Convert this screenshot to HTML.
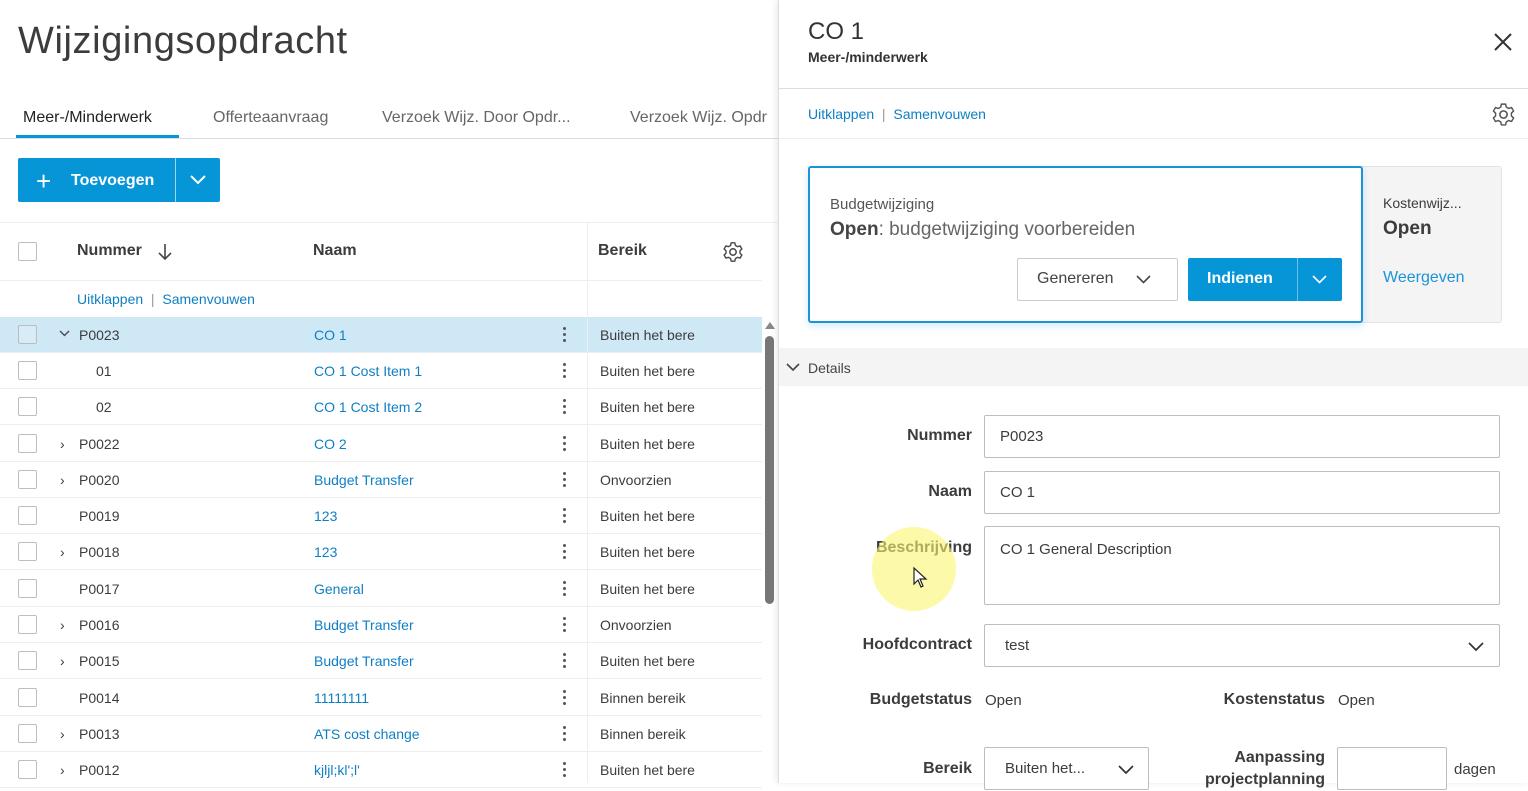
<!DOCTYPE html>
<html><head><meta charset="utf-8"><style>
*{box-sizing:border-box;margin:0;padding:0}
body{width:1528px;height:783px;overflow:hidden;background:#fff;font-family:"Liberation Sans",sans-serif;color:#3c3c3c;position:relative}
.a{position:absolute;white-space:nowrap}
.blue{color:#0f7fc4}
.cb{position:absolute;left:18px;width:19px;height:19px;border:1px solid #bdbdbd;border-radius:2px;background:#fff}
.row{position:absolute;left:0;width:762px;height:36px;border-bottom:1px solid #eee;font-size:14px}
.row span{position:absolute;top:10px}
.row svg{position:absolute;left:59px;top:13px}
.dots{position:absolute;left:563px;top:10px;width:3px}
.dots i{display:block;width:3px;height:3px;background:#555;border-radius:50%;margin-bottom:3px}
.lbl{position:absolute;font-size:16px;font-weight:bold;color:#3c3c3c;text-align:right;width:200px}
.inp{position:absolute;border:1px solid #bdbdbd;border-radius:2px;background:#fff;font-size:15px;padding:12px 15px}
</style></head><body>
<div class="a" style="left:18px;top:20px;font-size:38px;color:#3c3c3c;letter-spacing:.6px">Wijzigingsopdracht</div>
<div class="a" style="left:23px;top:109px;font-size:16px;color:#222">Meer-/Minderwerk</div>
<div style="position:absolute;left:16px;top:135px;width:163px;height:3px;background:#0696d7"></div>
<div class="a" style="left:213px;top:109px;font-size:16px;color:#666">Offerteaanvraag</div>
<div class="a" style="left:382px;top:109px;font-size:16px;color:#666">Verzoek Wijz. Door Opdr...</div>
<div class="a" style="left:630px;top:109px;font-size:16px;color:#666">Verzoek Wijz. Opdr</div>
<div style="position:absolute;left:0;top:138px;width:779px;height:1px;background:#ddd"></div>
<div style="position:absolute;left:18px;top:158px;width:202px;height:44px;background:#0696d7;border-radius:2px;color:#fff;font-size:16px;font-weight:bold">
<span class="a" style="left:18px;top:8px;font-size:26px;font-weight:normal">+</span>
<span class="a" style="left:53px;top:14px">Toevoegen</span>
<div style="position:absolute;left:157px;top:0;width:1px;height:44px;background:#fff;opacity:.6"></div>
<svg class="a" style="left:172px;top:17px" width="16" height="10"><path d="M1 1l7 7 7-7" stroke="#fff" stroke-width="2" fill="none"/></svg>
</div>
<div style="position:absolute;left:0;top:222px;width:779px;height:1px;background:#eee"></div>
<div style="position:absolute;left:0;top:280px;width:762px;height:1px;background:#eee"></div>
<div style="position:absolute;left:587px;top:222px;width:1px;height:95px;background:#eee"></div>
<div class="cb" style="top:242px"></div>
<div class="a" style="left:77px;top:242px;font-size:16px;font-weight:bold">Nummer</div>
<svg class="a" style="left:157px;top:243px" width="16" height="18"><path d="M8 1v15M2 10l6 6 6-6" stroke="#444" stroke-width="1.6" fill="none"/></svg>
<div class="a" style="left:313px;top:242px;font-size:16px;font-weight:bold">Naam</div>
<div class="a" style="left:598px;top:242px;font-size:16px;font-weight:bold">Bereik</div>
<svg class="a" style="left:722px;top:241px" width="22" height="22" viewBox="0 0 24 24"><circle cx="12" cy="12" r="3.5" stroke="#444" stroke-width="1.6" fill="none"/><path d="M10 2h4l.6 2.8 2.4 1.4 2.7-.9 2 3.4-2.1 1.9v2.8l2.1 1.9-2 3.4-2.7-.9-2.4 1.4L14 22h-4l-.6-2.8-2.4-1.4-2.7.9-2-3.4 2.1-1.9v-2.8L2.3 8.7l2-3.4 2.7.9 2.4-1.4z" stroke="#444" stroke-width="1.5" fill="none" stroke-linejoin="round"/></svg>
<div class="a blue" style="left:77px;top:291px;font-size:14px">Uitklappen <span style="color:#999">&nbsp;|&nbsp;</span> Samenvouwen</div>

<div class="row" style="top:317px;background:#cfe8f6"><div class="cb" style="top:8px;background:#d8ecf7"></div><svg width="11" height="7"><path d="M1 1l4.5 4.5L10 1" stroke="#444" stroke-width="1.3" fill="none"/></svg><span style="left:79px">P0023</span><span class="blue" style="left:314px">CO 1</span><div class="dots"><i></i><i></i><i></i></div><span style="left:600px">Buiten het bere</span></div>
<div class="row" style="top:353px"><div class="cb" style="top:8px"></div><span style="left:96px">01</span><span class="blue" style="left:314px">CO 1 Cost Item 1</span><div class="dots"><i></i><i></i><i></i></div><span style="left:600px">Buiten het bere</span></div>
<div class="row" style="top:389px"><div class="cb" style="top:8px"></div><span style="left:96px">02</span><span class="blue" style="left:314px">CO 1 Cost Item 2</span><div class="dots"><i></i><i></i><i></i></div><span style="left:600px">Buiten het bere</span></div>
<div class="row" style="top:426px"><div class="cb" style="top:8px"></div><span style="left:60px">›</span><span style="left:79px">P0022</span><span class="blue" style="left:314px">CO 2</span><div class="dots"><i></i><i></i><i></i></div><span style="left:600px">Buiten het bere</span></div>
<div class="row" style="top:462px"><div class="cb" style="top:8px"></div><span style="left:60px">›</span><span style="left:79px">P0020</span><span class="blue" style="left:314px">Budget Transfer</span><div class="dots"><i></i><i></i><i></i></div><span style="left:600px">Onvoorzien</span></div>
<div class="row" style="top:498px"><div class="cb" style="top:8px"></div><span style="left:79px">P0019</span><span class="blue" style="left:314px">123</span><div class="dots"><i></i><i></i><i></i></div><span style="left:600px">Buiten het bere</span></div>
<div class="row" style="top:534px"><div class="cb" style="top:8px"></div><span style="left:60px">›</span><span style="left:79px">P0018</span><span class="blue" style="left:314px">123</span><div class="dots"><i></i><i></i><i></i></div><span style="left:600px">Buiten het bere</span></div>
<div class="row" style="top:571px"><div class="cb" style="top:8px"></div><span style="left:79px">P0017</span><span class="blue" style="left:314px">General</span><div class="dots"><i></i><i></i><i></i></div><span style="left:600px">Buiten het bere</span></div>
<div class="row" style="top:607px"><div class="cb" style="top:8px"></div><span style="left:60px">›</span><span style="left:79px">P0016</span><span class="blue" style="left:314px">Budget Transfer</span><div class="dots"><i></i><i></i><i></i></div><span style="left:600px">Onvoorzien</span></div>
<div class="row" style="top:643px"><div class="cb" style="top:8px"></div><span style="left:60px">›</span><span style="left:79px">P0015</span><span class="blue" style="left:314px">Budget Transfer</span><div class="dots"><i></i><i></i><i></i></div><span style="left:600px">Buiten het bere</span></div>
<div class="row" style="top:680px"><div class="cb" style="top:8px"></div><span style="left:79px">P0014</span><span class="blue" style="left:314px">11111111</span><div class="dots"><i></i><i></i><i></i></div><span style="left:600px">Binnen bereik</span></div>
<div class="row" style="top:716px"><div class="cb" style="top:8px"></div><span style="left:60px">›</span><span style="left:79px">P0013</span><span class="blue" style="left:314px">ATS cost change</span><div class="dots"><i></i><i></i><i></i></div><span style="left:600px">Binnen bereik</span></div>
<div class="row" style="top:752px"><div class="cb" style="top:8px"></div><span style="left:60px">›</span><span style="left:79px">P0012</span><span class="blue" style="left:314px">kjljl;kl';l'</span><div class="dots"><i></i><i></i><i></i></div><span style="left:600px">Buiten het bere</span></div>
<div style="position:absolute;left:587px;top:317px;width:1px;height:466px;background:#eee"></div>
<svg class="a" style="left:765px;top:321px" width="10" height="8"><path d="M0 8L5 1 10 8z" fill="#888"/></svg>
<div style="position:absolute;left:765px;top:336px;width:9px;height:268px;background:#777;border-radius:5px"></div>

<div style="position:absolute;left:778px;top:0;width:750px;height:783px;background:#fff;border-left:1px solid #ddd;box-shadow:-2px 0 6px rgba(0,0,0,.08)"></div>
<div class="a" style="left:808px;top:18px;font-size:24px;color:#333">CO 1</div>
<div class="a" style="left:808px;top:49px;font-size:14px;font-weight:bold;color:#333">Meer-/minderwerk</div>
<svg class="a" style="left:1494px;top:33px" width="18" height="18"><path d="M1 1l16 16M17 1L1 17" stroke="#333" stroke-width="2"/></svg>
<div style="position:absolute;left:779px;top:88px;width:749px;height:1px;background:#ddd"></div>
<div class="a blue" style="left:808px;top:106px;font-size:14px">Uitklappen <span style="color:#999">&nbsp;|&nbsp;</span> Samenvouwen</div>
<svg class="a" style="left:1491px;top:102px" width="25" height="25" viewBox="0 0 24 24"><circle cx="12" cy="12" r="3.5" stroke="#555" stroke-width="1.5" fill="none"/><path d="M10 2h4l.6 2.8 2.4 1.4 2.7-.9 2 3.4-2.1 1.9v2.8l2.1 1.9-2 3.4-2.7-.9-2.4 1.4L14 22h-4l-.6-2.8-2.4-1.4-2.7.9-2-3.4 2.1-1.9v-2.8L2.3 8.7l2-3.4 2.7.9 2.4-1.4z" stroke="#555" stroke-width="1.4" fill="none" stroke-linejoin="round"/></svg>
<div style="position:absolute;left:779px;top:138px;width:749px;height:1px;background:#eee"></div>

<div style="position:absolute;left:1360px;top:166px;width:142px;height:157px;background:#f4f4f5;border:1px solid #e3e3e3;border-radius:3px"></div>
<div class="a" style="left:1383px;top:195px;font-size:14px">Kostenwijz...</div>
<div class="a" style="left:1383px;top:218px;font-size:19px;font-weight:bold">Open</div>
<div class="a" style="left:1383px;top:269px;font-size:16px;color:#1b93d9">Weergeven</div>
<div style="position:absolute;left:808px;top:166px;width:555px;height:157px;background:#fff;border:2px solid #1b93d9;border-radius:3px;box-shadow:0 3px 8px rgba(27,147,217,.2)"></div>
<div class="a" style="left:830px;top:196px;font-size:15px;color:#555">Budgetwijziging</div>
<div class="a" style="left:830px;top:219px;font-size:19px;color:#666"><b style="color:#444">Open</b>: budgetwijziging voorbereiden</div>
<div style="position:absolute;left:1017px;top:258px;width:161px;height:43px;border:1px solid #ccc;border-radius:2px"></div>
<div class="a" style="left:1037px;top:270px;font-size:16px;color:#444">Genereren</div>
<svg class="a" style="left:1136px;top:275px" width="15" height="9"><path d="M1 1l6.5 6.5L14 1" stroke="#444" stroke-width="1.6" fill="none"/></svg>
<div style="position:absolute;left:1188px;top:258px;width:154px;height:43px;background:#0696d7;border-radius:2px"></div>
<div style="position:absolute;left:1297px;top:258px;width:1px;height:43px;background:#6cc0ea"></div>
<div class="a" style="left:1207px;top:270px;font-size:16px;font-weight:bold;color:#fff">Indienen</div>
<svg class="a" style="left:1312px;top:275px" width="15" height="9"><path d="M1 1l6.5 6.5L14 1" stroke="#fff" stroke-width="1.6" fill="none"/></svg>

<div style="position:absolute;left:779px;top:348px;width:749px;height:38px;background:#f4f4f5"></div>
<svg class="a" style="left:786px;top:363px" width="14" height="9"><path d="M1 1l6 6 6-6" stroke="#444" stroke-width="1.6" fill="none"/></svg>
<div class="a" style="left:808px;top:360px;font-size:14px;color:#444">Details</div>

<div class="lbl" style="left:772px;top:427px">Nummer</div>
<div class="inp" style="left:984px;top:415px;width:516px;height:43px">P0023</div>
<div class="lbl" style="left:772px;top:483px">Naam</div>
<div class="inp" style="left:984px;top:471px;width:516px;height:43px">CO 1</div>
<div class="lbl" style="left:772px;top:539px">Beschrijving</div>
<div class="inp" style="left:984px;top:526px;width:516px;height:79px;padding-top:14px">CO 1 General Description</div>
<div style="position:absolute;left:872px;top:527px;width:84px;height:84px;border-radius:50%;background:rgba(250,245,110,.6)"></div>
<svg class="a" style="left:912px;top:566px" width="16" height="22"><path d="M2 2v16l4-4 3 7 2-1-3-7h6z" fill="#fff" stroke="#222" stroke-width="1.2"/></svg>
<div class="lbl" style="left:772px;top:636px">Hoofdcontract</div>
<div class="inp" style="left:984px;top:624px;width:516px;height:43px;padding-left:20px">test</div>
<svg class="a" style="left:1468px;top:642px" width="16" height="10"><path d="M1 1l7 7 7-7" stroke="#333" stroke-width="1.7" fill="none"/></svg>
<div class="lbl" style="left:772px;top:691px">Budgetstatus</div>
<div class="a" style="left:985px;top:692px;font-size:15px">Open</div>
<div class="lbl" style="left:1125px;top:691px">Kostenstatus</div>
<div class="a" style="left:1338px;top:692px;font-size:15px">Open</div>
<div class="lbl" style="left:772px;top:760px">Bereik</div>
<div class="inp" style="left:984px;top:747px;width:165px;height:43px;padding-left:20px">Buiten het...</div>
<svg class="a" style="left:1118px;top:765px" width="16" height="10"><path d="M1 1l7 7 7-7" stroke="#333" stroke-width="1.7" fill="none"/></svg>
<div class="lbl" style="left:1125px;top:747px;line-height:22px">Aanpassing<br>projectplanning</div>
<div class="inp" style="left:1337px;top:747px;width:110px;height:43px"></div>
<div class="a" style="left:1454px;top:761px;font-size:15px">dagen</div>
</body></html>
